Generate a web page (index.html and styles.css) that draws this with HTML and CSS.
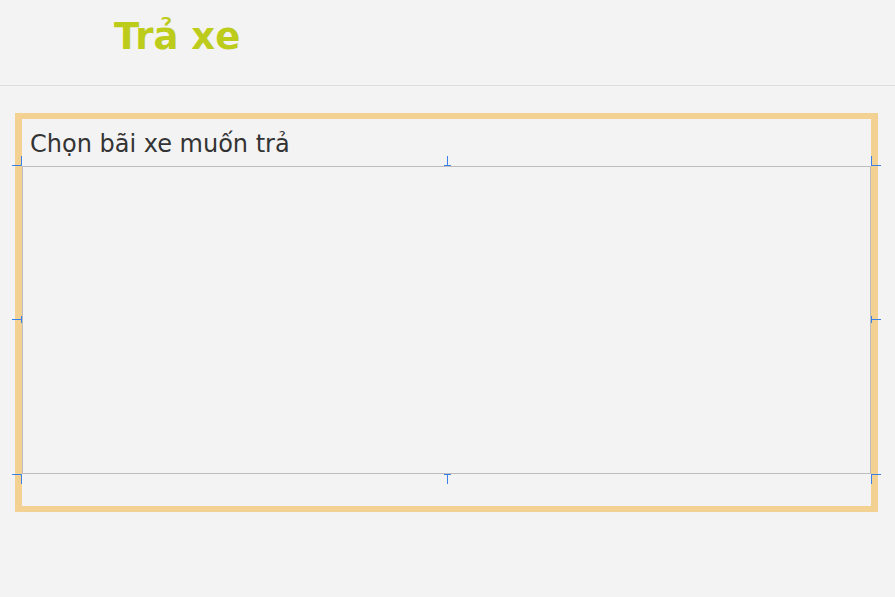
FILE: index.html
```html
<!DOCTYPE html>
<html lang="vi">
<head>
<meta charset="utf-8">
<title>Trả xe</title>
<link rel="stylesheet" href="styles.css">
</head>
<body>
  <header class="header">
    <h1 class="title">Trả xe</h1>
  </header>
  <main class="content">
    <section class="panel">
      <h2 class="panel-title">Chọn bãi xe muốn trả</h2>
      <div class="map">
        <span class="h h-tl"></span>
        <span class="h h-tc"></span>
        <span class="h h-tr"></span>
        <span class="h h-ml"></span>
        <span class="h h-mr"></span>
        <span class="h h-bl"></span>
        <span class="h h-bc"></span>
        <span class="h h-br"></span>
      </div>
    </section>
  </main>
</body>
</html>
```

FILE: styles.css
```css
* { box-sizing: border-box; }
html, body { margin: 0; padding: 0; }
body {
  background: #f3f3f3;
  font-family: "DejaVu Sans", sans-serif;
  color: #333;
  width: 895px;
  height: 597px;
  overflow: hidden;
}
.header {
  height: 86px;
  border-bottom: 1px solid #dedede;
  padding: 16px 0 0 114px;
}
.title {
  margin: 0;
  font-size: 37px;
  font-weight: bold;
  color: #bdcb1b;
  line-height: 42px;
}
.content {
  padding: 27px 17px 0 15px;
}
.panel {
  border-style: solid;
  border-color: #f2d193;
  border-width: 6px 7px;
  padding-bottom: 32px;
}
.panel-title {
  margin: 0;
  font-weight: normal;
  font-size: 24px;
  line-height: 28px;
  padding: 11px 8px 8px 8px;
  color: #333;
}
.map {
  position: relative;
  height: 308px;
  box-shadow: inset 0 0 0 1px #bdbdbd;
}
.h {
  position: absolute;
  border: 0 solid #3b80e6;
  width: 10px;
  height: 10px;
}
.h-tl { left: -10px; top: -10px; border-right-width: 1px; border-bottom-width: 1px; }
.h-tr { left: 100%; top: -10px; border-left-width: 1px; border-bottom-width: 1px; }
.h-bl { left: -10px; top: 100%; border-right-width: 1px; border-top-width: 1px; }
.h-br { left: 100%; top: 100%; border-left-width: 1px; border-top-width: 1px; }
.h-ml { left: -10px; top: 150px; height: 7px; border-right-width: 1px; }
.h-mr { left: 100%; top: 150px; height: 7px; border-left-width: 1px; }
.h-ml::after,
.h-mr::after { content: ""; position: absolute; left: 0; right: 0; top: 3px; height: 1px; background: #3b80e6; }
.h-tc { left: 422px; top: -10px; width: 7px; border-bottom-width: 1px; }
.h-bc { left: 422px; top: 100%; width: 7px; border-top-width: 1px; }
.h-tc::after,
.h-bc::after { content: ""; position: absolute; left: 3px; top: 0; bottom: 0; width: 1px; background: #3b80e6; }
```
